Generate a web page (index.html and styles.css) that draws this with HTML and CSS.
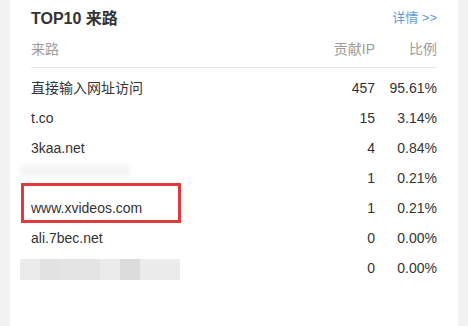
FILE: index.html
```html
<!DOCTYPE html>
<html>
<head>
<meta charset="utf-8">
<link rel="stylesheet" href="styles.css">
</head>
<body>
<div class="card">
  <div class="title-row">
    <span class="title">TOP10 来路</span>
    <a class="more">详情 &gt;&gt;</a>
  </div>
  <div class="row head">
    <span class="src">来路</span>
    <span class="ip">贡献IP</span>
    <span class="pct">比例</span>
  </div>
  <div class="body">
    <div class="row"><span class="src">直接输入网址访问</span><span class="ip">457</span><span class="pct">95.61%</span></div>
    <div class="row"><span class="src">t.co</span><span class="ip">15</span><span class="pct">3.14%</span></div>
    <div class="row"><span class="src">3kaa.net</span><span class="ip">4</span><span class="pct">0.84%</span></div>
    <div class="row"><span class="src"></span><span class="ip">1</span><span class="pct">0.21%</span></div>
    <div class="row"><span class="src">www.xvideos.com</span><span class="ip">1</span><span class="pct">0.21%</span></div>
    <div class="row"><span class="src">ali.7bec.net</span><span class="ip">0</span><span class="pct">0.00%</span></div>
    <div class="row"><span class="src"></span><span class="ip">0</span><span class="pct">0.00%</span></div>
  </div>
  <div class="smudge"></div>
  <div class="mosaic">
    <i class="m1"></i><i class="m2"></i><i class="m3"></i><i class="m3"></i><i class="m1"></i><i class="m4"></i><i class="m5"></i><i class="m5"></i>
  </div>
  <div class="highlight"></div>
</div>
</body>
</html>
```
FILE: styles.css
```css
html, body {
  margin: 0;
  padding: 0;
  background: #f2f2f2;
}
body {
  font-family: "Liberation Sans", "Noto Sans CJK SC", sans-serif;
  font-size: 14px;
  color: #333;
}
.card {
  position: relative;
  margin-left: 10px;
  width: 448px;
  height: 326px;
  background: #fff;
  box-sizing: border-box;
  padding: 0 21px;
}
.title-row {
  display: flex;
  justify-content: space-between;
  align-items: center;
  height: 31px;
  padding-top: 6px;
  box-sizing: border-box;
}
.title {
  font-size: 16px;
  font-weight: bold;
  color: #333;
  line-height: 22px;
}
.more {
  color: #5d9cd8;
  font-size: 13px;
  line-height: 22px;
  margin-top: -2px;
}
.row {
  display: flex;
  align-items: center;
  height: 30px;
  line-height: 30px;
}
.row.head {
  height: 36px;
  color: #9c9c9c;
  border-bottom: 1px solid #e6e6e6;
}
.body {
  padding-top: 5px;
}
.src {
  flex: 1;
}
.ip {
  width: 80px;
  text-align: right;
}
.pct {
  width: 62px;
  text-align: right;
}
.highlight {
  position: absolute;
  left: 11px;
  top: 183px;
  width: 160px;
  height: 40px;
  box-sizing: border-box;
  border: 3px solid #e23a3c;
}
.smudge {
  position: absolute;
  left: 10px;
  top: 165px;
  width: 110px;
  height: 11px;
  background: #f4f4f4;
  border-radius: 6px 2px 2px 6px;
  filter: blur(2px);
}
.mosaic {
  position: absolute;
  left: 10px;
  top: 259px;
  display: flex;
  height: 21px;
}
.mosaic i {
  width: 20px;
  height: 21px;
}
.m1 { background: #ebebeb; }
.m2 { background: #e2e2e2; }
.m3 { background: #e4e4e4; }
.m4 { background: #dcdcdc; }
.m5 { background: #ececec; }
```
